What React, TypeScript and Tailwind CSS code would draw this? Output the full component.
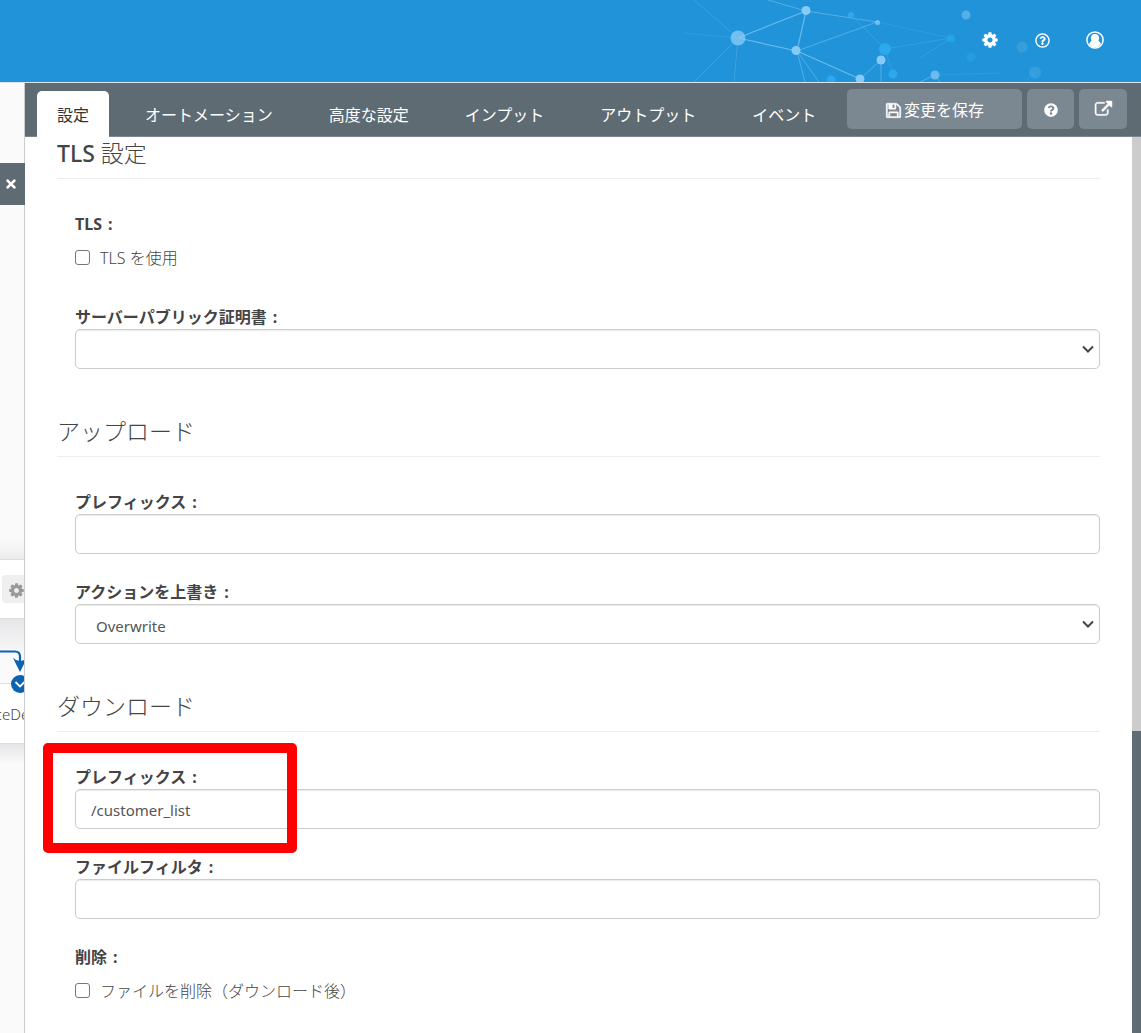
import { useState, type ReactNode } from 'react'
import { FaQuestionCircle, FaRegQuestionCircle, FaTimes } from 'react-icons/fa'

const TABS = ['設定', 'オートメーション', '高度な設定', 'インプット', 'アウトプット', 'イベント']

const COG =
  'M1152 896q0-106-75-181t-181-75-181 75-75 181 75 181 181 75 181-75 75-181zm512-109v222q0 12-8 23t-20 13l-185 28q-19 54-39 91 35 50 107 138 10 12 10 25t-9 23q-27 37-99 108t-94 71q-12 0-26-9l-138-108q-44 23-91 38-16 136-29 186-7 28-36 28h-222q-14 0-24.5-8.5t-11.5-21.5l-28-184q-49-16-90-37l-141 107q-10 9-25 9-14 0-25-11-126-114-165-168-7-10-7-23 0-12 8-23 15-21 51-66.5t54-70.5q-27-50-41-99l-183-27q-13-2-21-12.5t-8-23.5v-222q0-12 8-23t19-13l186-28q14-46 39-92-40-57-107-138-10-12-10-24 0-10 9-23 26-36 98.5-107.5t94.5-71.5q13 0 26 10l138 107q44-23 91-38 16-136 29-186 7-28 36-28h222q14 0 24.5 8.5t11.5 21.5l28 184q49 16 90 37l142-107q9-9 24-9 13 0 25 10 129 119 165 170 7 8 7 22 0 12-8 23-15 21-51 66.5t-54 70.5q26 50 41 98l183 28q13 2 21 12.5t8 23.5z'
const FLOPPY =
  'M512 1536h768v-384h-768v384zm896 0h128v-896q0-14-10-38.5t-20-34.5l-281-281q-10-10-34-20t-39-10v416q0 40-28 68t-68 28h-576q-40 0-68-28t-28-68v-416h-128v1280h128v-416q0-40 28-68t68-28h832q40 0 68 28t28 68v416zm-384-928v-320q0-13-9.5-22.5t-22.5-9.5h-192q-13 0-22.5 9.5t-9.5 22.5v320q0 13 9.5 22.5t22.5 9.5h192q13 0 22.5-9.5t9.5-22.5zm640 32v928q0 40-28 68t-68 28h-1344q-40 0-68-28t-28-68v-1344q0-40 28-68t68-28h928q40 0 88 20t76 48l280 280q28 28 48 76t20 88z'
const EXTERNAL =
  'M1408 928v320q0 119-84.5 203.5t-203.5 84.5h-832q-119 0-203.5-84.5t-84.5-203.5v-832q0-119 84.5-203.5t203.5-84.5h704q14 0 23 9t9 23v64q0 14-9 23t-23 9h-704q-66 0-113 47t-47 113v832q0 66 47 113t113 47h832q66 0 113-47t47-113v-320q0-14 9-23t23-9h64q14 0 23 9t9 23zm384-864v512q0 26-19 45t-45 19-45-19l-176-176-652 652q-10 10-23 10t-23-10l-114-114q-10-10-10-23t10-23l652-652-176-176q-19-19-19-45t19-45 45-19h512q26 0 45 19t19 45z'

function Icon({ d, className }: { d: string; className: string }) {
  return (
    <svg viewBox="0 0 1792 1792" fill="currentColor" className={className} aria-hidden="true">
      <path d={d} />
    </svg>
  )
}

function UserIcon() {
  return (
    <svg viewBox="0 0 18 18" className="h-[18px] w-[18px]" aria-hidden="true">
      <circle cx="9" cy="9" r="8.1" fill="none" stroke="white" strokeWidth="1.5" />
      <circle cx="9" cy="7.2" r="4.1" fill="white" />
      <path d="M3.2 13.4C3.5 11.400 4.600 10 6 9.800a4.400 4.400 0 0 0 6 0c1.400.2 2.500 1.600 2.800 3.600A7.400 7.400 0 0 1 3.200 13.400z" fill="white" />
    </svg>
  )
}

/** Decorative node network at the right of the banner. */
function Network() {
  return (
    <svg viewBox="0 0 461 82" className="absolute top-0 right-0 h-[82px] w-[461px]" aria-hidden="true">
      <g stroke="#8fd0f8" fill="none">
        <path d="M58 38L126 11M58 38L117 51M117 51L126 11M117 51L180 79" strokeOpacity=".65" strokeWidth="1.2" />
        <path d="M88 0L126 11L197 22L117 51L125 82M117 51L139 82M180 79L201 60V82M240 82L255 75L260 82" strokeOpacity=".45" />
        <path d="M58 38L14 0M58 38L14 82M58 38L54 82" strokeOpacity=".25" />
        <path d="M58 38L4 33M255 75L320 73M345 82L355 73M197 22L271 38" strokeOpacity=".15" />
      </g>
      <path d="M171 15L205 49L271 38L240 58M205 49L213 74" fill="none" stroke="#2fa9ee" strokeOpacity=".7" />
      <g fill="#2ba8ee">
        <circle cx="171" cy="15" r="3" />
        <circle cx="205" cy="49" r="6" />
        <circle cx="213" cy="74" r="4.5" />
        <circle cx="151" cy="80" r="4.5" />
        <circle cx="271" cy="38.5" r="4" opacity=".7" />
        <circle cx="291" cy="57" r="4.5" opacity=".5" />
      </g>
      <g fill="#86cbf6">
        <circle cx="58" cy="38" r="7.5" opacity=".8" />
        <circle cx="126" cy="10.5" r="4.5" />
        <circle cx="116" cy="50.5" r="4.5" />
        <circle cx="197.5" cy="22.5" r="2.5" opacity=".8" />
        <circle cx="201" cy="60" r="4.5" />
        <circle cx="180" cy="79" r="4.5" />
        <circle cx="255" cy="75" r="4.5" opacity=".7" />
        <circle cx="286" cy="15" r="4.5" opacity=".5" />
        <circle cx="342" cy="47" r="5.5" opacity=".2" />
        <circle cx="355" cy="72.5" r="6" opacity=".2" />
      </g>
    </svg>
  )
}

function SectionTitle({ children }: { children: ReactNode }) {
  return <h2 className="border-b border-[#eee] pb-[9px] text-[23px] leading-8 font-light">{children}</h2>
}

const labelClass = 'block pt-px text-base leading-[23px] font-bold'
const inputClass =
  'block h-10 w-full rounded-[5px] border border-[#ccc] bg-white text-[15px] text-[#555] shadow-[inset_0_1px_1px_rgba(0,0,0,0.08)] outline-none focus:border-sky-400'

function LabelText({ children }: { children: ReactNode }) {
  return <>{children}<span className="ml-1.5">:</span></>
}

function TextField({ id, label, value = '', highlight = false }: { id: string; label: string; value?: string; highlight?: boolean }) {
  return (
    <div className="relative">
      <label htmlFor={id} className={labelClass}><LabelText>{label}</LabelText></label>
      <input id={id} type="text" defaultValue={value} className={`${inputClass} px-[15px] pt-0.5`} />
      {highlight && (
        <div className="pointer-events-none absolute -top-[22px] -left-8 h-[110px] w-[254px] rounded-[5px] border-[10px] border-[#f00]" />
      )}
    </div>
  )
}

function SelectField({ id, label, options }: { id: string; label: string; options: string[] }) {
  return (
    <div>
      <label htmlFor={id} className={labelClass}><LabelText>{label}</LabelText></label>
      <div className="relative">
        <select id={id} className={`${inputClass} appearance-none px-5 pt-1`}>
          {options.map((o) => <option key={o}>{o}</option>)}
        </select>
        <svg viewBox="0 0 12 8" className="pointer-events-none absolute top-4 right-1.5 h-2 w-3" aria-hidden="true">
          <path d="M1 1.500L6 6.500L11 1.500" fill="none" stroke="#444" strokeWidth="2" />
        </svg>
      </div>
    </div>
  )
}

function CheckField({ id, label, text }: { id: string; label: string; text: string }) {
  return (
    <fieldset>
      <legend className={labelClass}><LabelText>{label}</LabelText></legend>
      <div className="flex h-[43px] items-center gap-2.5">
        <input
          id={id}
          type="checkbox"
          className="h-[15px] w-[15px] appearance-none rounded-[3px] border border-[#767676] bg-white checked:bg-sky-600"
        />
        <label htmlFor={id} className="text-base font-light">{text}</label>
      </div>
    </fieldset>
  )
}

/** Strip of the flow canvas still visible beside the settings panel. */
function CanvasStrip() {
  return (
    <aside className="flex w-6 shrink-0 flex-col bg-[#fafafa] pt-20">
      <button aria-label="閉じる" className="relative z-10 flex h-[42px] w-[25px] items-center bg-[#5f6b72] pl-1 text-white">
        <FaTimes className="h-3.5 w-3.5" />
      </button>
      <div className="mt-[334px] h-5 bg-linear-to-b from-[#fafafa] to-[#ececee]" />
      <div className="h-[60px] overflow-hidden border-y border-[#ddd] bg-white pt-[15px] pl-0.5">
        <button aria-label="ノード設定" className="flex h-7 w-10 items-center rounded-sm bg-[#efefef] pt-0.5 pl-1.5 text-[#999]">
          <Icon d={COG} className="h-[17px] w-[17px]" />
        </button>
      </div>
      <div className="h-[65px] border-b border-[#ddd] bg-linear-to-b from-[#e6e6e9] to-[#fafafa] to-60%" />
      <div className="relative h-[60px] border-b border-[#ddd] bg-white">
        <div className="flex w-6 justify-center overflow-hidden pt-[18px] text-[15px] leading-6 font-light">ceDe</div>
        <svg viewBox="0 0 24 50" className="absolute -top-[38px] left-0 h-[50px] w-6" aria-hidden="true">
          <path d="M0 5.500H15Q20 5.500 20 10.500V18" fill="none" stroke="#0b63b1" strokeWidth="2.200" />
          <path d="M13 12Q20 18 27 12L20 26z" fill="#0b63b1" />
          <circle cx="20" cy="38" r="9" fill="#0b63b1" />
          <path d="M15.500 36L20 40.500L24.500 36" fill="none" stroke="white" strokeWidth="1.800" />
        </svg>
      </div>
      <div className="h-5 bg-linear-to-b from-[#e6e6e9] to-[#fafafa]" />
    </aside>
  )
}

export default function App() {
  const [active, setActive] = useState(TABS[0])

  return (
    <div className="flex min-h-screen flex-col bg-white font-['Noto_Sans','Noto_Sans_CJK_JP',sans-serif] text-[#444]">
      <header className="relative flex h-[83px] items-center justify-end overflow-hidden border-b border-[#dde5ea] bg-[#2193d8] pr-[37px] pb-0.5 text-white">
        <Network />
        <div className="relative flex items-center gap-9">
          <button aria-label="設定"><Icon d={COG} className="h-[18px] w-[18px]" /></button>
          <button aria-label="ヘルプ"><FaRegQuestionCircle className="h-[15px] w-[15px]" /></button>
          <button aria-label="アカウント"><UserIcon /></button>
        </div>
      </header>

      <div className="flex flex-1">
        <CanvasStrip />

        <main className="flex min-w-0 flex-1 flex-col border-l border-[#ccc]">
          <div className="flex h-[54px] justify-between border-b border-[#7b8791] bg-[#5f6b72] pr-3.5 pl-3">
            <nav className="-mb-px flex gap-4 pt-2">
              {TABS.map((tab) => (
                <button
                  key={tab}
                  onClick={() => setActive(tab)}
                  className={`rounded-t-[5px] px-5 pt-0.5 text-base whitespace-nowrap ${tab === active ? 'bg-white text-[#333]' : 'text-white'}`}
                >
                  {tab}
                </button>
              ))}
            </nav>
            <div className="flex gap-[5px] pt-1.5 text-white">
              <button className="flex h-10 w-[175px] items-center justify-center gap-0.5 rounded-[5px] bg-[#7b8791] pt-0.5 text-base">
                <Icon d={FLOPPY} className="h-[17px] w-[17px] stroke-current stroke-[50]" />
                変更を保存
              </button>
              <button aria-label="ヘルプ" className="flex h-10 w-[47px] items-center justify-center rounded-[5px] bg-[#7b8791] pt-0.5">
                <FaQuestionCircle className="h-3.5 w-3.5" />
              </button>
              <button aria-label="新しいウィンドウで開く" className="flex h-10 w-12 items-center justify-center rounded-[5px] bg-[#7b8791]">
                <Icon d={EXTERNAL} className="h-[17px] w-[17px] overflow-visible stroke-current stroke-[50]" />
              </button>
            </div>
          </div>

          <div className="flex flex-1">
            <form className="flex-1 px-8 pb-5">
              <SectionTitle><span className="font-medium">TLS</span> 設定</SectionTitle>
              <div className="mb-[46px] flex flex-col gap-[26px] pt-[33px] pl-[18px]">
                <CheckField id="tls" label="TLS" text="TLS を使用" />
                <SelectField id="cert" label="サーバーパブリック証明書" options={['']} />
              </div>

              <SectionTitle>アップロード</SectionTitle>
              <div className="mb-[46px] flex flex-col gap-[26px] pt-[33px] pl-[18px]">
                <TextField id="upload-prefix" label="プレフィックス" />
                <SelectField id="overwrite" label="アクションを上書き" options={['Overwrite']} />
              </div>

              <SectionTitle>ダウンロード</SectionTitle>
              <div className="flex flex-col gap-[26px] pt-[33px] pl-[18px]">
                <TextField id="download-prefix" label="プレフィックス" value="/customer_list" highlight />
                <TextField id="file-filter" label="ファイルフィルタ" />
                <CheckField id="delete" label="削除" text="ファイルを削除（ダウンロード後）" />
              </div>
            </form>

            {/* scroll rail */}
            <div className="flex w-[9px] flex-col bg-[#5f6b72]">
              <div className="h-[594px] bg-[#ccc]" />
            </div>
          </div>
        </main>
      </div>
    </div>
  )
}
